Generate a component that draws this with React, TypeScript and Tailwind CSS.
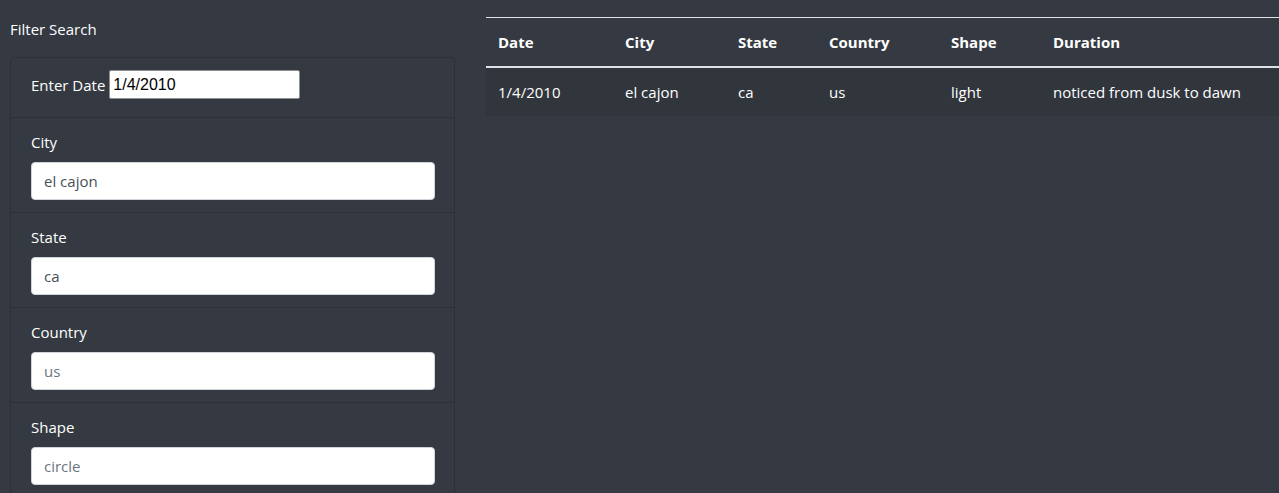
import React from 'react';

const rows = [
  { date: '1/4/2010', city: 'el cajon', state: 'ca', country: 'us', shape: 'light', duration: 'noticed from dusk to dawn' },
];

const filters = [
  { label: 'City', value: 'el cajon', placeholder: false },
  { label: 'State', value: 'ca', placeholder: false },
  { label: 'Country', value: 'us', placeholder: true },
  { label: 'Shape', value: 'circle', placeholder: true },
];

const App = () => {
  return (
    <div className="h-[493px] bg-[#353a42] text-white font-['Open_Sans',sans-serif] text-[15px] overflow-hidden">
      <div className="flex">
        {/* Filters */}
        <aside className="w-[445px] ml-[10px] shrink-0">
          <h4 className="h-[57px] pt-[18px] leading-[22px] text-[15px]">Filter Search</h4>
          <ul className="border border-[#2c3037] rounded-[4px]">
            <li className="flex items-center pl-[20px] pt-[12px] pb-[18px] border-b border-[#2c3037]">
              <label className="mr-[4px] pt-[2px]">Enter Date</label>
              <input
                readOnly
                value="1/4/2010"
                className="w-[191px] h-[29px] bg-white text-black border border-[#8f8f8f] rounded-[2px] px-[3px] text-[16px] font-['Liberation_Sans',sans-serif] outline-none"
              />
            </li>
            {filters.map((f, i) => (
              <li
                key={f.label}
                className={`px-[20px] pt-[12px] pb-[12px] ${i < filters.length - 1 ? 'border-b border-[#2c3037]' : ''}`}
              >
                <label className="block leading-[24px] mb-[8px]">{f.label}</label>
                <input
                  readOnly
                  placeholder={f.value}
                  defaultValue={f.placeholder ? undefined : f.value}
                  className="block w-[404px] h-[38px] bg-white text-[#495057] placeholder:text-[#6c757d] border border-[#ced4da] rounded-[4px] px-[12px] text-[15px] outline-none"
                />
              </li>
            ))}
          </ul>
        </aside>

        {/* Results */}
        <main className="flex-1 ml-[31px] pt-[17px]">
          <table className="w-full text-left border-t border-[#dee2e6]">
            <thead>
              <tr className="border-b-2 border-[#dee2e6]">
                <th className="w-[127px] px-[12px] h-[49px] pt-[1px] font-bold">Date</th>
                <th className="w-[113px] px-[12px] pt-[1px] font-bold">City</th>
                <th className="w-[91px] px-[12px] pt-[1px] font-bold">State</th>
                <th className="w-[122px] px-[12px] pt-[1px] font-bold">Country</th>
                <th className="w-[102px] px-[12px] pt-[1px] font-bold">Shape</th>
                <th className="px-[12px] pt-[1px] font-bold">Duration</th>
              </tr>
            </thead>
            <tbody>
              {rows.map((r) => (
                <tr key={r.date} className="bg-[#31353c]">
                  <td className="px-[12px] h-[49px] pt-[1px]">{r.date}</td>
                  <td className="px-[12px] pt-[1px]">{r.city}</td>
                  <td className="px-[12px] pt-[1px]">{r.state}</td>
                  <td className="px-[12px] pt-[1px]">{r.country}</td>
                  <td className="px-[12px] pt-[1px]">{r.shape}</td>
                  <td className="px-[12px] pt-[1px]">{r.duration}</td>
                </tr>
              ))}
            </tbody>
          </table>
        </main>
      </div>
    </div>
  );
};

export default App;
